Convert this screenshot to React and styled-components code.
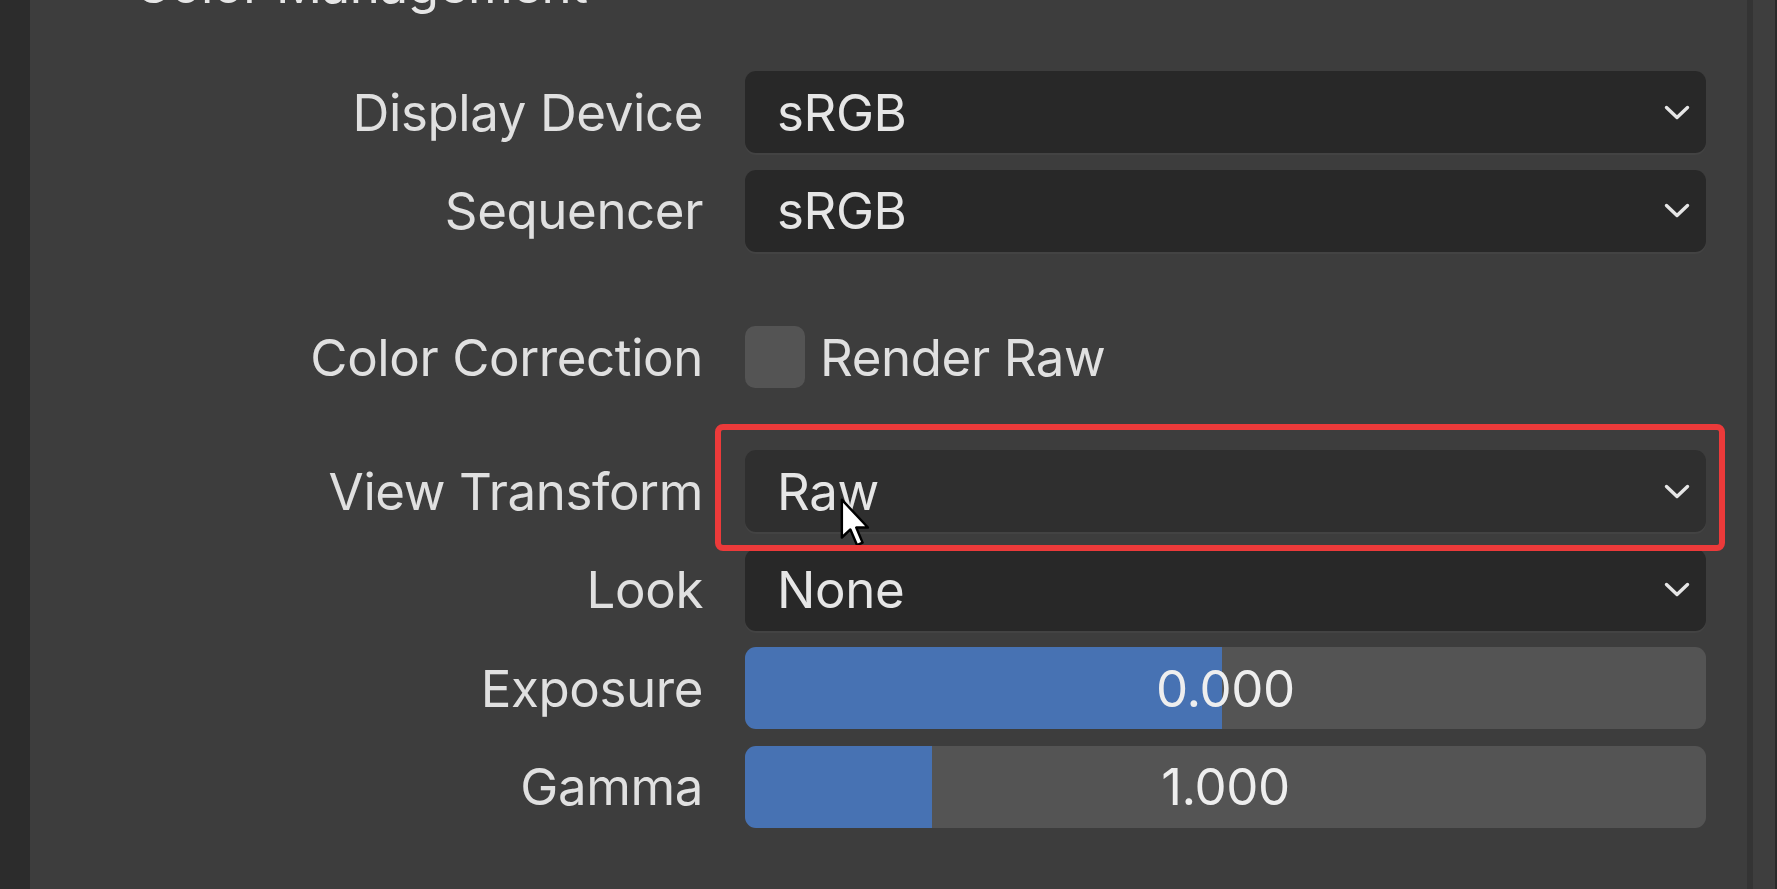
import React from "react";
import styled, { createGlobalStyle } from "styled-components";

const GlobalStyle = createGlobalStyle`
  html, body {
    margin: 0;
    padding: 0;
    background: #3d3d3d;
    overflow: hidden;
  }
  * { box-sizing: border-box; }
`;

const Screen = styled.div`
  display: flex;
  width: 1777px;
  height: 889px;
  overflow: hidden;
  background: #3d3d3d;
  font-family: Inter, "Noto Sans", "DejaVu Sans", sans-serif;
  font-size: 51px;
  letter-spacing: -0.4px;
  color: #e6e6e6;
`;

const LeftStrip = styled.div`
  flex: 0 0 30px;
  background: #2c2c2c;
`;

const Panel = styled.div`
  flex: 0 0 1717px;
  display: flex;
  flex-direction: column;
  background: #3d3d3d;
`;

const Divider = styled.div`
  flex: 0 0 6px;
  background: #343434;
`;

const Gutter = styled.div`
  flex: 0 0 22px;
  background: #3e3e3e;
`;

const Edge = styled.div`
  flex: 0 0 2px;
  background: #2a2a2a;
`;

const Header = styled.div`
  display: flex;
  align-items: center;
  gap: 32px;
  height: 60px;
  line-height: 60px;
  margin-top: -45px;
  padding-left: 46px;
  white-space: nowrap;
`;

const HeaderTitle = styled.span`
  color: #e6e6e6;
`;

const Group = styled.div`
  display: flex;
  flex-direction: column;
  gap: 16.5px;
  margin-top: ${(p) => p.$top}px;
`;

const Row = styled.div`
  display: grid;
  grid-template-columns: 673px 961px;
  column-gap: 42px;
  height: 82px;
  align-items: center;
  margin-top: ${(p) => p.$top || 0}px;
`;

const Label = styled.div`
  text-align: right;
  color: #e0e0e0;
  white-space: nowrap;
`;

const Control = styled.div`
  position: relative;
  height: 82px;
  display: flex;
  align-items: center;
`;

const Dropdown = styled.div`
  flex: 1;
  height: 82px;
  display: flex;
  align-items: center;
  justify-content: space-between;
  padding: 0 16px 0 32px;
  border-radius: 11px;
  background: ${(p) => (p.$hover ? "#2f2f2f" : "#282828")};
  box-shadow: 0 2px 0 rgba(255, 255, 255, 0.03);
  color: #e6e6e6;
  white-space: nowrap;
`;

const Slider = styled.div`
  flex: 1;
  height: 82px;
  display: flex;
  align-items: center;
  justify-content: center;
  border-radius: 11px;
  background: linear-gradient(
    to right,
    #4772b3 0,
    #4772b3 ${(p) => p.$pct}%,
    #545454 ${(p) => p.$pct}%,
    #545454 100%
  );
  color: #eeeeee;
`;

const CheckRow = styled.div`
  display: flex;
  align-items: center;
  gap: 15px;
  height: 82px;
`;

const CheckBox = styled.div`
  width: 60px;
  height: 62px;
  border-radius: 10px;
  background: #545454;
`;

const CheckText = styled.span`
  color: #e0e0e0;
  white-space: nowrap;
`;

const Highlight = styled.div`
  position: absolute;
  top: -26px;
  left: -30px;
  right: -19px;
  bottom: -19px;
  border: 6px solid #ec3a3a;
  border-radius: 8px;
  pointer-events: none;
  z-index: 3;
`;

const CursorMark = styled.svg`
  position: absolute;
  left: 95px;
  top: 48px;
  z-index: 2;
  pointer-events: none;
`;

const ChevronIcon = ({ size = 26 }) => (
  <svg width={size} height={15} viewBox="0 0 26 15" fill="none">
    <polyline
      points="2.5,2.5 13,12.5 23.5,2.5"
      stroke="#e6e6e6"
      strokeWidth="3.4"
      strokeLinecap="round"
      strokeLinejoin="round"
    />
  </svg>
);

const Cursor = () => (
  <CursorMark width="32" height="50" viewBox="0 0 13 20.5">
    <path
      d="M0.7 0.7 L0.7 16.2 L4.2 12.9 L6.9 19.3 L9.2 18.3 L6.6 12.1 L11.4 12.1 Z"
      fill="#ffffff"
      stroke="#000000"
      strokeWidth="1"
      strokeLinejoin="round"
    />
  </CursorMark>
);

const Select = ({ label, value, hover, highlighted, top }) => (
  <Row $top={top}>
    <Label>{label}</Label>
    <Control>
      <Dropdown $hover={hover}>
        <span>{value}</span>
        <ChevronIcon />
      </Dropdown>
      {highlighted && (
        <>
          <Cursor />
          <Highlight />
        </>
      )}
    </Control>
  </Row>
);

const NumberSlider = ({ label, value, min, max }) => {
  const pct = ((value - min) / (max - min)) * 100;
  return (
    <Row>
      <Label>{label}</Label>
      <Control>
        <Slider $pct={pct}>{value.toFixed(3)}</Slider>
      </Control>
    </Row>
  );
};

export default function App() {
  return (
    <>
      <GlobalStyle />
      <Screen>
        <LeftStrip />
        <Panel>
          <Header>
            <ChevronIcon />
            <HeaderTitle>Color Management</HeaderTitle>
          </Header>
          <Group $top={56}>
            <Select label="Display Device" value="sRGB" />
            <Select label="Sequencer" value="sRGB" />
          </Group>
          <Row $top={64.5}>
            <Label>Color Correction</Label>
            <CheckRow>
              <CheckBox />
              <CheckText>Render Raw</CheckText>
            </CheckRow>
          </Row>
          <Group $top={52}>
            <Select label="View Transform" value="Raw" hover highlighted />
            <Select label="Look" value="None" />
            <NumberSlider label="Exposure" value={0} min={-9.7} max={9.85} />
            <NumberSlider label="Gamma" value={1} min={0} max={5.15} />
          </Group>
        </Panel>
        <Divider />
        <Gutter />
        <Edge />
      </Screen>
    </>
  );
}
